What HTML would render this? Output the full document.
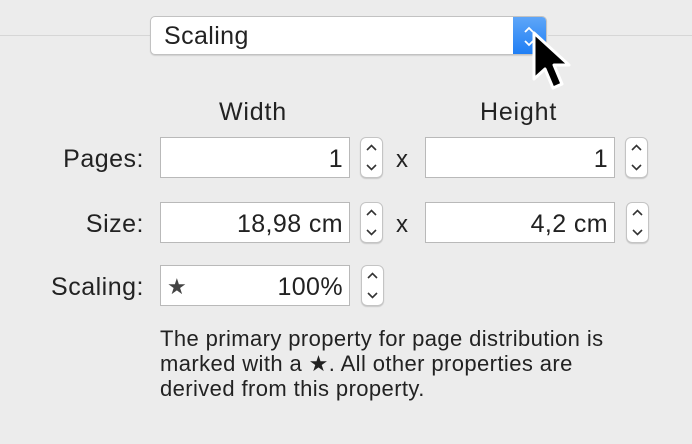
<!DOCTYPE html>
<html><head><style>
body{margin:0;width:692px;height:444px;background:#ececec;position:relative;overflow:hidden;font-family:"Liberation Sans",sans-serif;color:#222}
.a{position:absolute}
.line{height:1px;background:#d6d6d6;top:35px}
.f{position:absolute;background:#fff;border:1px solid #b9b9b9;box-sizing:border-box;height:41px;font-size:25px;letter-spacing:0.4px;text-align:right;padding-right:6px;line-height:42px;color:#222}
.st{position:absolute;width:23px;height:41px;background:#fff;border:1px solid #c4c4c4;box-sizing:border-box;border-radius:6px;box-shadow:0 1px 1px rgba(0,0,0,.15)}
.lab{position:absolute;font-size:25px;letter-spacing:0.5px;text-align:right;width:144px;left:0}
.x{position:absolute;font-size:24px;left:396px}
</style></head><body>
<div class="a line" style="left:0;width:150px"></div>
<div class="a line" style="left:548px;width:144px"></div>
<div class="a" style="left:150px;top:16px;width:397px;height:39px;background:#fff;border:1px solid #c2c2c2;box-sizing:border-box;border-radius:5px;box-shadow:0 1px 1px rgba(0,0,0,.12);overflow:hidden">
<div class="a" style="left:13px;top:5px;font-size:25px;letter-spacing:0.4px;color:#222">Scaling</div>
<div class="a" style="right:0;top:0;width:33px;height:39px;background:linear-gradient(#5ea6f8,#1c7cf4)"></div>
<svg class="a" style="right:0;top:0" width="33" height="39"><path d="M12 15 L16 11 L20 15 M12 24 L16 28 L20 24" stroke="#fff" stroke-width="1.8" fill="none"/></svg>
</div>
<div class="a" style="left:219px;top:98px;font-size:25px;letter-spacing:0.8px">Width</div>
<div class="a" style="left:480px;top:98px;font-size:25px;letter-spacing:0.8px">Height</div>

<div class="lab" style="top:145px">Pages:</div>
<div class="f" style="left:160px;top:137px;width:190px">1</div>
<div class="st" style="left:360px;top:137px"></div>
<div class="x" style="top:146px">x</div>
<div class="f" style="left:425px;top:137px;width:190px">1</div>
<div class="st" style="left:625px;top:137px"></div>

<div class="lab" style="top:210px">Size:</div>
<div class="f" style="left:160px;top:202px;width:190px">18,98 cm</div>
<div class="st" style="left:360px;top:202px"></div>
<div class="x" style="top:211px">x</div>
<div class="f" style="left:425px;top:202px;width:190px">4,2 cm</div>
<div class="st" style="left:626px;top:202px"></div>

<div class="lab" style="top:273px">Scaling:</div>
<div class="f" style="left:160px;top:265px;width:190px">100%<span class="a" style="left:6px;top:0;color:#444;font-size:22px">★</span></div>
<div class="st" style="left:361px;top:265px"></div>

<svg class="a" style="left:0;top:0" width="692" height="444">
<g stroke="#333" stroke-width="1.6" fill="none">
<path d="M367 150 L371.5 145.5 L376 150 M367 165 L371.5 169.5 L376 165"/>
<path d="M632 150 L636.5 145.5 L641 150 M632 165 L636.5 169.5 L641 165"/>
<path d="M367 215 L371.5 210.5 L376 215 M367 230 L371.5 234.5 L376 230"/>
<path d="M633 215 L637.5 210.5 L642 215 M633 230 L637.5 234.5 L642 230"/>
<path d="M368 278 L372.5 273.5 L377 278 M368 293 L372.5 297.5 L377 293"/>
</g>
<path d="M534 33 L534 79 L545 69 L553 88 L562 84 L554 65 L569 65 Z" fill="#000" stroke="#fff" stroke-width="3" stroke-linejoin="round"/>
</svg>

<div class="a" style="left:160px;top:326px;font-size:22px;letter-spacing:0.4px;line-height:25px;color:#222;white-space:nowrap">The primary property for page distribution is<br>marked with a ★. All other properties are<br>derived from this property.</div>
</body></html>
